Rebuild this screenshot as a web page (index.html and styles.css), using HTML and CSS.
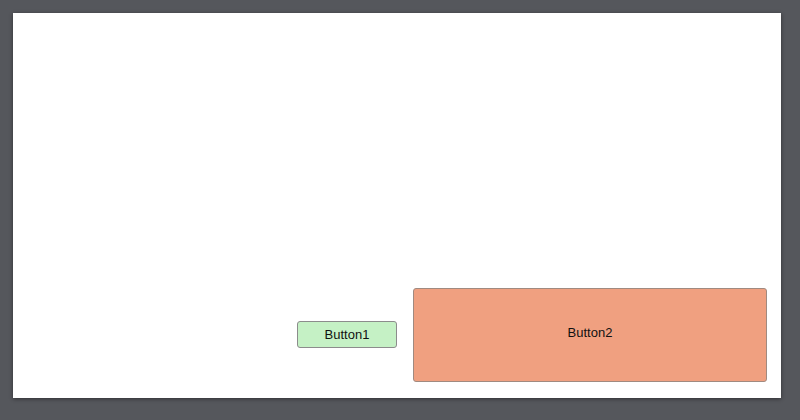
FILE: index.html
```html
<!DOCTYPE html>
<html>
<head>
<meta charset="utf-8">
<link rel="stylesheet" href="styles.css">
</head>
<body>
<div class="panel">
  <div class="spacer"></div>
  <div class="row">
    <button class="btn btn1">Button1</button>
    <button class="btn btn2">Button2</button>
  </div>
</div>
</body>
</html>
```
FILE: styles.css
```css
html, body {
  margin: 0;
  padding: 0;
  width: 800px;
  height: 420px;
  background: #55575c;
  overflow: hidden;
}
body {
  padding: 13px 0 0 13px;
  box-sizing: border-box;
  font-family: "Liberation Sans", Arial, sans-serif;
}
.panel {
  width: 768px;
  height: 385px;
  background: #ffffff;
  box-shadow: 0 1px 4px rgba(0,0,0,0.45);
  display: flex;
  flex-direction: column;
  box-sizing: border-box;
  padding: 0 14px 16px 0;
}
.spacer {
  flex: 1;
}
.row {
  display: flex;
  justify-content: flex-end;
  align-items: center;
  gap: 16px;
}
.btn {
  font-family: "Liberation Sans", Arial, sans-serif;
  font-size: 13px;
  color: #111;
  border: 1px solid #8c8c8c;
  border-radius: 3px;
  padding: 0;
  margin: 0;
  box-sizing: border-box;
}
.btn1 {
  width: 100px;
  height: 27px;
  background: #c5f1c5;
  margin-top: -1px;
}
.btn2 {
  width: 354px;
  height: 94px;
  background: #f0a080;
  border-color: #a08a80;
  padding-bottom: 6px;
}
```
